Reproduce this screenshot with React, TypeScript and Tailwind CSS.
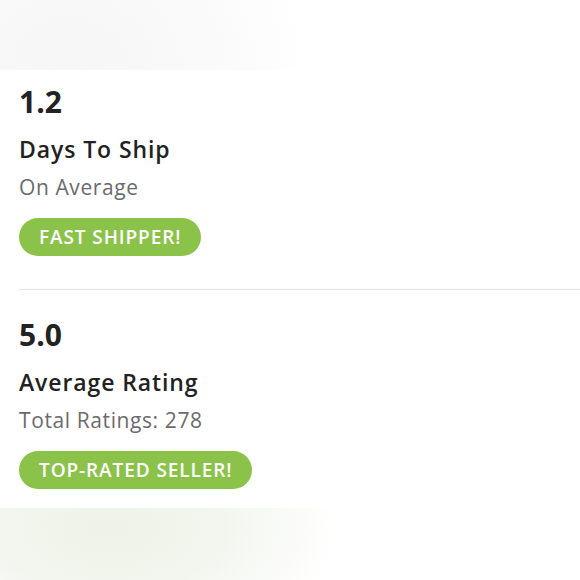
import React from 'react';

const stats = [
  { value: '1.2', title: 'Days To Ship', sub: 'On Average', badge: 'FAST SHIPPER!' },
  { value: '5.0', title: 'Average Rating', sub: 'Total Ratings: 278', badge: 'TOP-RATED SELLER!' },
];

const StatBlock: React.FC<(typeof stats)[number]> = ({ value, title, sub, badge }) => (
  <div className="pl-[19px]">
    <div className="text-[30px] font-bold leading-[36px] text-[#222222]">{value}</div>
    <div className="mt-[14px] text-[23px] font-semibold leading-[30px] tracking-[0.9px] text-[#222222]">{title}</div>
    <div className="mt-[10px] text-[21px] leading-[26px] tracking-[0.6px] text-[#6b6b6b]">{sub}</div>
    <div className="mt-[18px] inline-flex h-[38px] items-center rounded-full bg-[#8bc34a] px-[20px] text-[19px] font-semibold tracking-[0.9px] text-white">
      {badge}
    </div>
  </div>
);

export default function App() {
  return (
    <div className="h-[580px] w-[580px] overflow-hidden bg-white font-['Open_Sans',sans-serif]">
      <div className="h-[70px] bg-[radial-gradient(ellipse_240px_180px_at_70px_60px,#f6f6f6,#fafafa_60%,#ffffff)]" />
      <div className="pt-[14px]">
        <StatBlock {...stats[0]} />
        <div className="ml-[19px] mt-[33px] mb-[27px] h-px bg-[#e6e6e6]" />
        <StatBlock {...stats[1]} />
      </div>
      <div className="mt-[19px] h-[72px] bg-[radial-gradient(ellipse_230px_130px_at_110px_20px,#edf2e6,#f3f6ef_50%,#ffffff)]" />
    </div>
  );
}
